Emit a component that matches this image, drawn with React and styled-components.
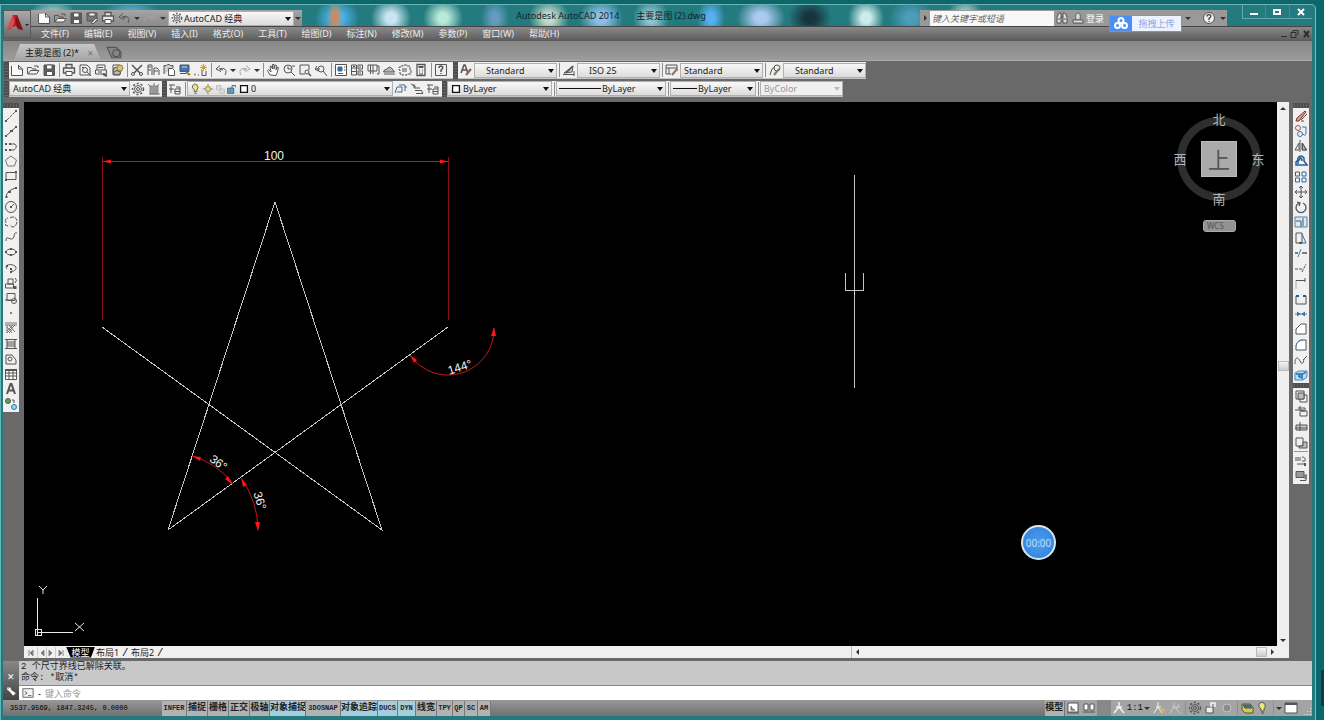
import styled, { createGlobalStyle, css } from 'styled-components'

const GlobalStyle = createGlobalStyle`
  *, *::before, *::after { box-sizing: border-box; }
  body {
    margin: 0;
    background: #0b6769;
    font-family: 'Noto Sans', 'Noto Sans CJK SC', sans-serif;
    font-size: 9px;
  }
  button, select, input {
    font-family: inherit;
    font-size: inherit;
    color: inherit;
    margin: 0;
    padding: 0;
    border: 0;
    border-radius: 0;
    background: none;
  }
`

/* every icon is drawn on a 14 x 14 grid */
const shapes = {
  new: <><path d="M1.500 3v9.500h11V6L8.500 2.500" fill="#fafafa" /><path d="M8.500 2v4h4" /></>,
  open: <><path d="M1.500 11V4.500h4l1 1.500h3.500v1.500" /><path d="M2 11l2.500-3.500H13L10.500 11z" fill="#f4f4f4" /><path d="M8 3h4v2" /></>,
  save: <><path d="M2 2h10.500v10.500H2z" fill="#5d5d5d" /><path d="M4.500 2h5.500v4H4.500zM4.500 8.500h6v4h-6z" fill="#fff" /></>,
  saveas: <><path d="M2 2h10v8H2z" fill="#777" /><path d="M4 2h6v3H4z" fill="#fff" /><path d="M6 12l5-5 1.500 1.500L8 13z" fill="#ddd" /></>,
  print: <><path d="M4 5V1.500h6V5M1.500 5h11v5h-11z" fill="#e8e8e8" strokeWidth="1.300" /><path d="M4 8.500h6v4H4z" fill="#fff" /></>,
  preview: <><path d="M2 12V2h7l3 3v7H2" /><circle cx="7" cy="7" r="2.500" /><path d="M9 9l4 4M4 4.500h2" /></>,
  publish: <><path d="M3 7V2h8v5M1.500 7h11v4h-11z" /><path d="M4 4.500h5M4 9h4" /><path d="M9 11l4 2" strokeWidth="2" /></>,
  globe: <><path d="M3 2h7v10H3z" /><circle cx="7" cy="8" r="4" fill="#b9c3a0" /><circle cx="10" cy="5" r="3" fill="#dfc067" stroke="#9a844d" /><path d="M4 9q3-3 6 0" /></>,
  cut: <><path d="M2 2l8 8M12 2L4 10" strokeWidth="1.500" /><circle cx="3" cy="11" r="1.500" /><circle cx="11" cy="11" r="1.500" /></>,
  copyclip: <><path d="M2 12V2h4v10M2 4h3M2 7h3M8 12V5h3l2 2v5M8 8h4" /></>,
  paste: <><path d="M2 11V2.500h2.500l1-1h2l1 1H11V5" fill="#ccc" /><path d="M6.500 5.500h4l2 2v5h-6z" fill="#fff" /></>,
  match: <><path d="M2 2h9v6.500H2z" fill="#3974bd" /><path d="M4 4h5" stroke="#cfe3f7" /><path d="M2 10.500h6" /><path d="M8 9l4 3" stroke="#a66b28" strokeWidth="2" /></>,
  blockedit: <><path d="M1 10.500v2M4 12h1M8 7v5.500h4V8" /><path d="M9.500 1v7M6 4.500h7M7 2l5 5M12 2L7 7" stroke="#d99b21" /></>,
  undo: <path d="M11 12c3-5-1-8-6-6M6 2.500L2 6l5 2.500M6 6.500l3 .5" fill="none" />,
  redo: <path d="M3 12C0 7 4 4 9 6M8 2.500L12 6 7 8.500M8 6.500L5 7" fill="none" stroke="#a4a4a4" />,
  pan: <path d="M4 12L1.500 7.500l1-1L5 9 4 3.500l1.200-.5L6.500 6V1.500h1.500V6l1-4 1.500.5L10 7l1.500-3 1 .5L11 10l-1 2.500z" fill="#fff" />,
  zoom: <><circle cx="6" cy="6" r="4" /><path d="M9 9l4 4M6 3.500V6h3M10 3h3" /></>,
  zoomwin: <><path d="M11 7V2H2v9h5" /><circle cx="9" cy="9" r="2" /><path d="M10.500 10.500L13 13" strokeWidth="1.500" /></>,
  zoomprev: <><circle cx="7" cy="6" r="3" /><path d="M9 8l4 5M1 6h5M3 3L1 6l3 2" /></>,
  props: <><path d="M1.500 1.500h11v11h-11z" fill="#fff" /><path d="M4 4h4v4H4z" fill="#3769a8" stroke="#3769a8" /><path d="M10 4h1.500M10 7h1.500M4 10.500h5" /></>,
  center: <><path d="M1.500 2h5v10h-5zM8 2h4.500v4H8zM8 8h4.500v4H8zM1.500 5h5M1.500 8.500h5" /><path d="M3 3.500h2M9 4h2M9 10h2" /></>,
  palette: <><path d="M2 2h9v6H2zM4.500 2v9M7 2v9M11 3h2v8h-2" /></>,
  sheet: <><path d="M1.500 9h11l-3-4-2-1-3 2-2 1zM2 11h11" fill="#b9b9b9" /></>,
  markup: <><path d="M3 3h2V2h4v1h3v4h1v4H9v1H4v-1H2V7H1V4h2z" fill="none" strokeDasharray="3 1" /><path d="M4 6h5M4 8h5" /></>,
  calc: <><path d="M3 1.500h8v11H3z" strokeWidth="1.300" /><path d="M4.500 4h5" strokeWidth="2" /><path d="M5 7h1M8 7h1M5 9h1M8 9h1M5 11h4" /></>,
  help: <><path d="M1.500 1.500h11v11h-11z" /><path d="M5 5q0-2 2-2 2.500.5 1.500 2.500L7 7v2M7 10v1" strokeWidth="1.500" /></>,
  textstyle: <><path d="M2 10L5 2h1l3 8M3 7h5" fill="none" strokeWidth="1.500" /><path d="M7 12l5-6" stroke="#865" strokeWidth="2" /></>,
  dimstyle: <><path d="M1 11.500h11M12 8v5M2 10l8-1 1-6z" fill="#ccc" /><path d="M4 10l7-7" strokeWidth="1.500" /></>,
  tablestyle: <><path d="M1 2h11v3H1zM1 5v6h5M4 5v6M12 5v3" /><path d="M7 12l5-6" stroke="#8a7a62" strokeWidth="2" /></>,
  leaderstyle: <><path d="M2 12l2-6 3-2" fill="none" /><circle cx="9" cy="5" r="3" /><path d="M6 12l5-6" stroke="#8a7a62" strokeWidth="2" /></>,
  gear: <><circle cx="7" cy="7" r="3.500" /><circle cx="7" cy="7" r="1.500" /><circle cx="7" cy="7" r="5.500" fill="none" strokeWidth="1.500" strokeDasharray="2 2" /></>,
  workspace: <><path d="M3 4h8v8H3z" fill="#999" stroke="#888" /><path d="M1 2l3 3M12 2l-2 3M2 12h11M7 1v3" stroke="#777" /></>,
  layers: <><path d="M1 3h6M3 3v8M1 7h5M8 5h4v7H7V7h5M7 9.500h5" /></>,
  layerprev: <><path d="M1 11l2-6h5v5H3M5 3h6v6M11 5h2" fill="none" stroke="#46698b" /></>,
  layerstate: <><path d="M1 2l5 3M4 2v4M4 6h6M5 8.500h6M6 11.500h7M11 8l2 3" /></>,
  bulb: <><path d="M5 10V8q-3-2-2-5 2-3 5-1 3 3 0 6v2z" fill="#eee67e" /><path d="M5 12h3" /></>,
  sun: <><path d="M7 3l4 4-4 4-4-4z" fill="#eddc68" /><path d="M7 1v1M7 12v1M1 7h1M12 7h1" /></>,
  freeze: <><path d="M3 3h5v5H3zM7 7h5v5H7z" fill="#ddd" stroke="#bbb" /></>,
  lock: <><path d="M2 6h7v6H2z" fill="#6fa5c1" stroke="#235a78" /><path d="M7 6V3h4v2M5 8v2" fill="none" stroke="#235a78" /></>,
  swatch: <path d="M3 3h8v8H3z" fill="#fff" stroke="#111" strokeWidth="1.500" />,
  find: <><path d="M2 12V6l2-4h2v10zM8 12V2h2l2 4v6z" fill="#ddd" /><path d="M6 6h2M3 8h2M9 8h2" /></>,
  user: <><path d="M5 8C3 0 11 0 9 8M2 12V9h10v3z" fill="#ddd" /></>,
  query: <><circle cx="7" cy="7" r="5.500" fill="#eee" /><path d="M5 5.500Q5 3.500 7 3.500q2.500.5 1.500 2.500L7 7.500V9M7 10v1" strokeWidth="1.500" /></>,
  line: <><path d="M3 11L11 3" strokeDasharray="3 1" /><path d="M1 12h2M11 2h2" strokeWidth="2" /></>,
  xline: <><path d="M2 12L13 2" /><path d="M1 12h2M6 7h3M11 3h2" strokeWidth="2" /></>,
  pline: <><path d="M6 11h4q4-3 1-6H7" fill="none" /><path d="M1 5h2M1 11h2M6 4v2M5 11h2" strokeWidth="2" /></>,
  polygon: <path d="M7 2l5.500 4-2 6h-7l-2-6z" stroke="#777" />,
  rect: <><path d="M2 3.500h10v7H2z" /><path d="M1 11h2M11 3h2" strokeWidth="2" /></>,
  arc: <><path d="M2 12q1-7 10-9" fill="none" /><path d="M1.500 12h2M4 7h3M11 3h2" strokeWidth="2" /></>,
  circle: <><circle cx="7" cy="7" r="5.500" /><path d="M8 6l2-2" /><path d="M6 7h2" strokeWidth="2" /></>,
  cloud: <path d="M6 3q4-3 7 2 0 6-4 7-2 0-3-2M4 11Q0 11 2 7 0 4 4 3" fill="none" strokeDasharray="4 1" />,
  spline: <path d="M2 11c0-8 5 2 8-4 0-3 1-5 3-4" fill="none" />,
  ellipse: <><ellipse cx="7" cy="7" rx="5" ry="3" /><path d="M1 7h2M11 7h2M6 4h2M6 10h2" strokeWidth="2" /></>,
  ellipsearc: <><path d="M3 8c-3-4 3-6 8-3 3 3-1 6-4 5" fill="none" /><path d="M2 5h2M6 8h2M6 11h2" strokeWidth="2" /></>,
  insert: <><path d="M1.500 8h8v4h-8zM4 3h5v5H4zM11 2q3 2 0 5" /><path d="M11 10v3" strokeWidth="3" /></>,
  block: <><path d="M3 2.500h8v7H3zM1 9h7" /><circle cx="10" cy="10" r="2.500" /></>,
  point: <path d="M6.500 6.500h1v1h-1z" />,
  hatch: <path d="M1 2h12M1 4h12M3 4v8M3 10l6-6M3 12l8-8M5 12l4-4M5 4l6 7M3 6l5 6" stroke="#777" />,
  gradient: <path d="M1 2.500h12M3 2v10M11 2v10M1 11.500h12M3 5h8M3 7h8M3 9h8" />,
  region: <><path d="M2 3v9h10V8L8 3z" /><circle cx="6" cy="7" r="2" /></>,
  table: <><path d="M1.500 2.500h11v10h-11z" fill="#fff" /><path d="M1 3h12" strokeWidth="2" /><path d="M2 6h10M2 9h10M5 3v9M9 3v9" /></>,
  text: <path d="M3 12L6.500 2h1L11 12M4 8.500h6" fill="none" strokeWidth="2" />,
  addsel: <><circle cx="4" cy="4" r="2.500" fill="#58a245" /><circle cx="10" cy="10" r="2.500" fill="#9fd2ef" stroke="#287cae" /><path d="M8 3h2v3" /></>,
  erase: <><path d="M2 12h3l7-9-1-1-8 7z" fill="#d49b8c" stroke="#8b332a" /><path d="M7 11l6-6M7 12h3" /></>,
  copy: <><circle cx="4" cy="4" r="2.500" stroke="#a35555" /><circle cx="6" cy="10" r="2.500" stroke="#2c78b5" /><path d="M8 3h4v7q-2 3-3 0" stroke="#2c78b5" fill="none" /></>,
  mirror: <><path d="M6 1v12M5 4v7H1zM8 4v7h5z" /><path d="M8.500 4v7H12z" fill="#8dbddf" /></>,
  offset: <><path d="M2 11V8q2-1 2-4 3-4 6 0v3l3 4zM4 10V7q2-1 2-3 2 0 2 3" fill="none" stroke="#245f9c" strokeWidth="1.500" /></>,
  array: <><path d="M1.500 2h4v4h-4z" /><path d="M8 2h4v4H8zM1.500 8h4v4h-4zM8 8h4v4H8z" stroke="#286ca8" /></>,
  move: <path d="M7 1v12M1 7h12M5 3l2-2 2 2M5 11l2 2 2-2M3 5L1 7l2 2M11 5l2 2-2 2" fill="none" />,
  rotate: <><path d="M9 3a5 5 0 1 1-4 0M3 2l3 1-1 3" fill="none" strokeWidth="1.300" /></>,
  scale: <><path d="M1 2h12v10H1z" fill="#d8eaf7" stroke="#4a83ad" /><path d="M2 6h5v6M9 3v8" /></>,
  stretch: <><path d="M2 2h6v10H2z" /><path d="M8 3l4 9H7" stroke="#356e9c" /><path d="M5 12h3" strokeWidth="2" /></>,
  trim: <><path d="M1 7h3M8 7h5" strokeWidth="1.500" /><path d="M4 11L7 3" stroke="#2c86a9" /></>,
  extend: <path d="M1 8h7M8 11l4-8" strokeDasharray="3 1" />,
  breakpt: <><path d="M2 12V3" stroke="#aaa" /><path d="M2 3.500h9M11 1v4" /></>,
  break: <><path d="M2 4v8h10V4" fill="none" /><path d="M2 4h3M9 4h3" stroke="#235ca6" strokeWidth="2" /></>,
  join: <path d="M1 7h12M3 5l3 2-3 2M11 5L8 7l3 2" fill="#3778a3" stroke="#3778a3" />,
  chamfer: <path d="M2 12V7l5-5h5v10z" fill="#fff" />,
  fillet: <><path d="M2 12V8q1-6 7-6h3v10z" fill="#fff" /><path d="M2 8q1-6 7-6" stroke="#4382b5" fill="none" /></>,
  blend: <path d="M1 11c0-8 3-7 5-3s3 3 4-2M9 7l4-4" fill="none" />,
  explode: <><path d="M1 5l4-2h8v6l-4 3H1z" stroke="#3b8bc1" fill="#b9dcf2" /><path d="M2 6h6v5M9 6l3-2M4 8h2v2" stroke="#1f67a5" strokeWidth="1.500" /></>,
  front: <><path d="M2 2h8v8H2z" /><path d="M4 4h6v6H4z" fill="#bbb" /><path d="M10 6h3v7H6v-3" fill="none" /></>,
  back: <><path d="M1 6h9M6 2v5h5V4H4M6 8v4h7V7H6" /></>,
  above: <><path d="M2 5h11v5H2z" fill="#ccc" /><path d="M6 2v9M1 8h12" /></>,
  under: <><path d="M2 2h7v8H2z" /><path d="M9 6h4v6H5v-2h4z" fill="#bbb" /></>,
  annot: <><path d="M2 3v4M4 3v4M6 3v4M8 3q4 0 3 4H8M3 10h8" /><path d="M11 9v3" strokeWidth="2" /></>,
  hatchback: <><path d="M2 2.500h8v6H2z" fill="#999" /><path d="M6 11.500h6V5M10 7h3M10 9h3" fill="none" /></>,
  layout: <path d="M2 2h10v9H2zM5 5v4h4M1 12h12" fill="#fff" />,
  views: <path d="M2 3h4v6H2zM8 3h4v6H8zM1 11h12" fill="#fff" />,
  scaleman: <path d="M7 1v5L2 12M7 6l5 6M4 6h6" fill="none" stroke="#f4f4f4" strokeWidth="1.500" />,
  scaleauto: <><path d="M6 1v5L2 12M6 6l4 6M4 6h5" fill="none" stroke="#f4f4f4" /><path d="M10 7v4M8 9h5" stroke="#e8b44c" strokeWidth="1.500" /></>,
  scaledim: <path d="M6 2v4L2 12M6 6l6 6M4 6h8M11 3L8 8" fill="none" stroke="#c9c9c9" />,
  unlock: <><path d="M2 6h7v6H2z" fill="#eee" /><path d="M7 6V2h4v4" fill="none" stroke="#f4f4f4" strokeWidth="1.500" /></>,
  ball: <circle cx="7" cy="7" r="4" fill="#8b8b8b" stroke="#c4c4c4" />,
  hardware: <><path d="M2 3h8l3 3v6H5L2 9z" fill="#d3ce41" /><path d="M3 4h7l2 3H5z" fill="#3a6eaf" /></>,
  screen: <><path d="M1 2h12v10H1z" fill="#fff" /><path d="M1 3h12" strokeWidth="2" /></>,
  prompt: <><path d="M1 2h12v10H1z" fill="#f4f4f4" /><path d="M3 5l3 2-3 2M7 10h4" fill="none" /></>,
  wrench: <path d="M2 2v3l3 2 5 6 3-3-6-4-1-3-2-1v3H2M10 10l2 1" fill="#fff" stroke="#fff" />,
  tabadd: <><path d="M1 3h8l4 4v5H5z" fill="#858585" /><circle cx="9" cy="8" r="3" /></>,
}

function Icon({ name, size = 14 }) {
  return (
    <svg width={size} height={size} viewBox="0 0 14 14" fill="none" stroke="#555" aria-hidden="true">
      {shapes[name]}
    </svg>
  )
}

function Tools({ items }) {
  return items.map((item, i) => {
    if (item === '|') return <Separator key={i} />
    if (item === 'v') return <Drop key={i} aria-label="more" />
    return <ToolButton key={i} aria-label={item}><Icon name={item} /></ToolButton>
  })
}

function Combo({ label, value, width, pad, icons = [], line, ...rest }) {
  return (
    <ComboBox $width={width} {...rest}>
      {icons.map((n) => <Icon key={n} name={n} size={12} />)}
      {line && <LineSample $width={line} />}
      <ComboSelect aria-label={label} $pad={pad} disabled={rest.$disabled}>
        <option>{value}</option>
      </ComboSelect>
    </ComboBox>
  )
}

const menus = ['文件(F)', '编辑(E)', '视图(V)', '插入(I)', '格式(O)', '工具(T)', '绘图(D)', '标注(N)', '修改(M)', '参数(P)', '窗口(W)', '帮助(H)']

const standardTools = ['new', 'open', 'save', '|', 'print', 'preview', 'publish', 'globe', '|', 'cut', 'copyclip', 'paste', 'match', 'blockedit', '|', 'undo', 'v', 'redo', 'v', '|', 'pan', 'zoom', 'zoomwin', 'zoomprev', '|', 'props', 'center', 'palette', 'sheet', 'markup', 'calc', '|', 'help']

const drawTools = ['line', 'xline', 'pline', 'polygon', 'rect', 'arc', 'circle', 'cloud', 'spline', 'ellipse', 'ellipsearc', 'insert', 'block', 'point', 'hatch', 'gradient', 'region', 'table', 'text', 'addsel']

const modifyTools = ['erase', 'copy', 'mirror', 'offset', 'array', 'move', 'rotate', 'scale', 'stretch', 'trim', 'extend', 'breakpt', 'break', 'join', 'chamfer', 'fillet', 'blend', 'explode']

const toggles = [
  ['INFER', 25], ['捕捉', 21], ['栅格', 21], ['正交', 21], ['极轴', 20], ['对象捕捉', 36, true],
  ['3DOSNAP', 35], ['对象追踪', 37, true], ['DUCS', 20, true], ['DYN', 18, true], ['线宽', 21],
  ['TPY', 16], ['QP', 12], ['SC', 13], ['AM', 13],
]

function Drawing() {
  return (
    <DrawingSvg aria-label="五角星">
      <g transform="translate(-24 -102)">
        <g stroke="#c6c6c6" fill="none" shapeRendering="crispEdges">
          <path d="M168 530L275 202L382 530L102 327M448 327L168 530" />
          <path d="M854.500 175V388M845.500 273V290.500H863.500V273" />
        </g>
        <g stroke="#c4161c" fill="none">
          <path d="M102.500 157V320M448.500 157V320" stroke="#8d1016" />
          <path d="M102 161.500H448" />
          <path d="M494 328A46 46 0 0 1 410 355" />
          <path d="M192 456A79 79 0 0 1 233 484" />
          <path d="M241 478A90 90 0 0 1 258 530" />
        </g>
        <g fill="#ff1418">
          <path d="M103 161.500l8-2v4zM448 161.500l-8-2v4z" />
          <path d="M494 327l-3 9h5zM410 355l4 8 3-3z" />
          <path d="M192 456l8 5 1-4zM233 485l-8-6 3-3z" />
          <path d="M241 478l2 9 4-2zM258 531l-3-9h5z" />
        </g>
        <g fill="#f2f2f2" fontSize="12" fontFamily="Liberation Sans, sans-serif" textAnchor="middle">
          <text x="274" y="160">100</text>
          <text transform="translate(461 371) rotate(-17)">144°</text>
          <text transform="translate(216 466) rotate(36)">36°</text>
          <text transform="translate(256 502) rotate(72)">36°</text>
        </g>
      </g>
    </DrawingSvg>
  )
}

function App() {
  return (
    <Desktop>
      <GlobalStyle />
      <Window>
        <Header>
          <LogoButton aria-label="AutoCAD">
            <svg width="27" height="28" viewBox="0 0 27 28">
              <path d="M3 19L9 4h4l6 15-5-1-2-3-4 1-2 2z" fill="#b3202a" />
              <path d="M9 4l2 7-3 5-5 3z" fill="#e14a49" />
              <path d="M13 4l6 15-5-1-3-7z" fill="#861119" />
              <path d="M21 13h4l-2 2z" fill="#222" />
            </svg>
          </LogoButton>
          <TitleBar>
            <QuickAccess>
              <Tools items={['new', 'open', 'save', 'saveas', 'print', 'undo', 'v', 'redo', 'v']} />
              <Combo label="工作空间" value="AutoCAD 经典" width={126} icons={['gear']} pad={1} />
              <Drop aria-label="自定义快速访问工具栏" />
            </QuickAccess>
            <Title><span>Autodesk AutoCAD 2014</span><span>主要是图 (2).dwg</span></Title>
            <InfoCenter>
              <Arrow $dir="right" aria-label="展开" />
              <SearchInput aria-label="搜索" placeholder="键入关键字或短语" />
              <Tools items={['find', 'user']} />
              <LoginButton>登录</LoginButton>
              <Drop aria-label="登录选项" />
              <HelpGroup><Tools items={['query', 'v']} /></HelpGroup>
              <UploadBadge>
                <svg width="22" height="17" viewBox="0 0 22 17" fill="none" stroke="#fff" strokeWidth="2">
                  <circle cx="11" cy="5.500" r="2.500" /><circle cx="7.500" cy="10.500" r="2.500" /><circle cx="14.500" cy="10.500" r="2.500" />
                </svg>
                <span>拖拽上传</span>
              </UploadBadge>
            </InfoCenter>
            <WindowButtons>
              <button aria-label="最小化"><svg width="10" height="10" stroke="#fff" strokeWidth="2"><path d="M1 7h8" /></svg></button>
              <button aria-label="最大化"><svg width="10" height="10" stroke="#fff" strokeWidth="2" fill="none"><path d="M2 3h6v4H2z" /></svg></button>
              <button aria-label="关闭"><svg width="10" height="10" stroke="#fff" strokeWidth="2"><path d="M2 2l6 6M8 2L2 8" /></svg></button>
            </WindowButtons>
          </TitleBar>
          <MenuBar>
            {menus.map((m) => <button key={m}>{m}</button>)}
            <DocButtons aria-hidden="true" width="32" height="10" fill="none" stroke="#2d2d2d">
              <path d="M1 7.500h6M11 3.500h5v5h-5zM13 3V1.500h5V6" /><path d="M24 2l5 6M29 2l-5 6" strokeWidth="2" />
            </DocButtons>
          </MenuBar>
        </Header>

        <FileTabs>
          <FileTab>主要是图 (2)*<span>✕</span></FileTab>
          <Icon name="tabadd" size={16} />
        </FileTabs>

        <ToolRows>
          <ToolRow>
            <Grip />
            <Bar $width={444}><Tools items={standardTools} /></Bar>
            <Grip />
            <Bar>
              <Tools items={['textstyle']} />
              <Combo label="文字样式" value="Standard" width={83} pad={9} />
              <Tools items={['|', 'dimstyle']} />
              <Combo label="标注样式" value="ISO 25" width={83} pad={9} />
              <Tools items={['|', 'tablestyle']} />
              <Combo label="表格样式" value="Standard" width={83} pad={1} />
              <Tools items={['|', 'leaderstyle']} />
              <Combo label="多重引线样式" value="Standard" width={83} pad={9} />
            </Bar>
          </ToolRow>
          <ToolRow $small>
            <Grip />
            <Bar $width={153}>
              <Combo label="工作空间" value="AutoCAD 经典" width={121} pad={1} />
              <Tools items={['gear', 'workspace']} />
            </Bar>
            <Grip />
            <Bar $width={275}>
              <Tools items={['layers', '|']} />
              <Combo label="图层" value="0" width={206} icons={['bulb', 'sun', 'freeze', 'lock', 'swatch']} pad={1} />
              <Tools items={['layerprev', 'layerstate', 'layers']} />
            </Bar>
            <Grip />
            <Bar>
              <Combo label="颜色" value="ByLayer" width={105} icons={['swatch']} pad={1} />
              <Tools items={['|']} />
              <Combo label="线型" value="ByLayer" width={110} line={42} pad={1} />
              <Tools items={['|']} />
              <Combo label="线宽" value="ByLayer" width={86} line={24} pad={1} />
              <Tools items={['|']} />
              <Combo label="打印样式" value="ByColor" width={83} pad={1} $disabled />
            </Bar>
          </ToolRow>
        </ToolRows>

        <Workspace>
          <SidePalette>
            <Grip $flat />
            <ToolColumn $height={304}><Tools items={drawTools} /></ToolColumn>
          </SidePalette>
          <Viewport>
            <Canvas>
              <Drawing />
              <UcsIcon width="60" height="56" fill="none" stroke="#e8e8e8">
                <path d="M4.500 50V13M4 47.500h36M2.500 44.500h6v6h-6z" shapeRendering="crispEdges" />
                <path d="M6 1l4 4 4-4M10 5v4M42 38l9 8M51 38l-9 8" />
              </UcsIcon>
              <ViewCube>
                <span>北</span>
                <span>西</span>
                <CubeFace>上</CubeFace>
                <span>东</span>
                <span>南</span>
              </ViewCube>
              <WcsButton>WCS</WcsButton>
              <TimeBadge>00:00</TimeBadge>
            </Canvas>
            <ScrollColumn>
              <Arrow $dir="up" aria-label="向上" />
              <Track $grow={246} />
              <Thumb />
              <Track $grow={262} />
              <Arrow $dir="down" aria-label="向下" />
            </ScrollColumn>
            <LayoutBar>
              <LayoutNav width="42" height="11" fill="#777" stroke="#888">
                <path d="M5 3v6M9 3L6 6l3 3zM20 3l-3 3 3 3zM25 3l3 3-3 3zM35 3l3 3-3 3zM39 3v6" />
                <path d="M13.500 0v11M22.500 0v11M31.500 0v11" stroke="#ccc" />
              </LayoutNav>
              <LayoutTab $active>模型</LayoutTab>
              <LayoutTab>布局1</LayoutTab><i>/</i>
              <LayoutTab>布局2</LayoutTab><i>/</i>
              <ScrollRow>
                <Arrow $dir="left" aria-label="向左" />
                <Track $grow={1} />
                <Thumb />
                <Arrow $dir="right" aria-label="向右" />
              </ScrollRow>
            </LayoutBar>
          </Viewport>
          <SidePalette>
            <Grip $flat />
            <ToolColumn $height={275}><Tools items={modifyTools} /></ToolColumn>
            <Grip $flat />
            <ToolColumn $height={96}>
              <Tools items={['front', 'back', 'above', 'under']} />
              <Separator $flat />
              <Tools items={['annot', 'hatchback']} />
            </ToolColumn>
          </SidePalette>
        </Workspace>

        <Command>
          <CommandHandle>
            <button aria-label="关闭">✕</button>
            <button aria-label="自定义"><Icon name="wrench" size={10} /></button>
          </CommandHandle>
          <CommandText>
            <History>
              <div>2 个尺寸界线已解除关联。</div>
              <div>命令: *取消*</div>
            </History>
            <CommandLine>
              <Icon name="prompt" size={12} />
              <span>-</span>
              <input aria-label="命令" placeholder="键入命令" />
            </CommandLine>
          </CommandText>
        </Command>

        <StatusBar>
          <Coords>3537.9569, 1847.3245, 0.0000</Coords>
          {toggles.map(([name, width, on]) => (
            <Toggle key={name} $width={width} $on={on} aria-pressed={!!on}>{name}</Toggle>
          ))}
          <StatusTray>
            <Toggle $width={20}>模型</Toggle>
            <Tools items={['layout', 'views']} />
            <TraySpace />
            <Tools items={['scaleman']} />
            <Scale>1:1</Scale>
            <Tools items={['v', 'scaleauto', 'scaledim', '|', 'gear', 'unlock', 'ball', '|', 'hardware', 'bulb', '|', 'v', 'screen']} />
            <Resize width="10" height="10" fill="#ddd"><path d="M8 2h1v1H8zM5 5h1v1H5zM8 5h1v1H8zM2 8h1v1H2zM5 8h1v1H5zM8 8h1v1H8z" /></Resize>
          </StatusTray>
        </StatusBar>
      </Window>
    </Desktop>
  )
}

const Desktop = styled.div`
  height: 100vh;
  min-height: 600px;
  padding: 4px 8px 0 0;
  background: linear-gradient(#17354c, #17354c) right calc(100% - 14px) / 3px 36px no-repeat, #0b6769;
  background-position: right bottom 14px;
`

const Window = styled.div`
  height: 100%;
  display: flex;
  flex-direction: column;
  border-top: 1px solid #6fb3b4;
  border-right: 1px solid #72c0bf;
  border-radius: 0 5px 0 0;
  padding: 0 3px 4px 3px;
  background: #22797f;
  box-shadow: inset 1px 0 #67b6b7;
`

const Header = styled.header`
  display: grid;
  grid-template-columns: 28px 1fr;
  grid-template-rows: 21px 15px;
`

const LogoButton = styled.button`
  grid-area: 1 / 1 / 3 / 2;
  position: relative;
  z-index: 1;
  width: 28px;
  height: 28px;
  margin-top: 5px;
  background: linear-gradient(#aaa, #6b6b6b);
  border: 1px solid #5a5a5a;
  & svg {
    display: block;
  }
`

const blob = (color, x, w) => `radial-gradient(ellipse ${w}px 20px at ${x}px 13px, ${color} 25%, transparent)`

const TitleBar = styled.div`
  grid-area: 1 / 1 / 2 / 3;
  display: flex;
  align-items: flex-end;
  padding-left: 28px;
  min-width: 0;
  background:
    ${blob('#c98b62', 332, 8)},
    ${blob('#4cb4ef', 334, 22)},
    ${blob('#c9e5f2', 388, 20)},
    ${blob('#b7ead9', 440, 20)},
    ${blob('#659bc0', 492, 14)},
    ${blob('#c3d9c9', 546, 20)},
    ${blob('#8fbfe8', 598, 22)},
    ${blob('#8fc4d0', 648, 18)},
    ${blob('#58aff0', 708, 14)},
    ${blob('#acc9ef', 758, 24)},
    ${blob('#18343e', 807, 22)},
    ${blob('#cdecee', 863, 18)},
    ${blob('#4b9db9', 908, 22)},
    ${blob('#b5d5c9', 962, 18)},
    ${blob('#6cabd8', 128, 30)},
    ${blob('#a4cfc9', 50, 24)},
    #237b7f;
`

const QuickAccess = styled.div`
  height: 16px;
  display: flex;
  align-items: center;
  padding-left: 5px;
  background: linear-gradient(#a4a4a4, #8b8b8b);
  & > button:nth-of-type(7), & > button:nth-of-type(9) {
    width: 10px;
  }
`

const Title = styled.div`
  flex: 1;
  display: flex;
  justify-content: center;
  align-self: center;
  gap: 17px;
  color: #10242a;
  white-space: nowrap;
`

const InfoCenter = styled.div`
  position: relative;
  height: 16px;
  width: 307px;
  display: flex;
  align-items: center;
  background: #999;
`

const SearchInput = styled.input`
  width: 124px;
  height: 15px;
  padding: 0 2px;
  background: #f8f8f8;
  font-style: italic;
  &::placeholder {
    color: #666;
  }
`

const LoginButton = styled.button`
  flex: 1;
  color: #fff;
  text-align: left;
`

const HelpGroup = styled.div`
  display: flex;
  align-items: center;
  gap: 2px;
  margin-left: 9px;
`

const UploadBadge = styled.button`
  position: absolute;
  top: 5px;
  left: 189px;
  width: 73px;
  height: 17px;
  display: flex;
  background: #4c8ff2;
  border: 1px solid #5b98f2;
  & span {
    flex: 1;
    line-height: 15px;
    color: #8fa7e4;
    background: #edf2ff;
  }
  & svg {
    margin-top: -1px;
    flex: none;
  }
`

const WindowButtons = styled.div`
  display: flex;
  align-self: flex-start;
  width: 70px;
  height: 14px;
  margin-left: 15px;
  border: solid #5ea9ac;
  border-width: 0 0 1px 1px;
  & button {
    flex: 1;
    line-height: 0;
  }
  & button + button {
    border-left: 1px solid #3f9195;
  }
`

const MenuBar = styled.nav`
  grid-area: 2 / 1 / 3 / 3;
  display: flex;
  align-items: center;
  gap: 15px;
  padding-left: 38px;
  color: #ececec;
  background: linear-gradient(#898989, #5b5b5b);
  border-top: 1px solid #464646;
  & button {
    white-space: nowrap;
    line-height: 14px;
  }
`

const DocButtons = styled.svg`
  margin-left: auto;
`

const FileTabs = styled.div`
  height: 20px;
  display: flex;
  align-items: flex-end;
  padding-left: 11px;
  gap: 5px;
  background: linear-gradient(#868686, #9c9c9c);
  border-bottom: 1px solid #aaa;
`

const FileTab = styled.button`
  width: 87px;
  height: 16px;
  display: flex;
  align-items: center;
  justify-content: space-between;
  padding: 0 7px 0 11px;
  color: #151515;
  background: linear-gradient(#c8c8c8, #a5a5a5);
  clip-path: polygon(7% 0, 92% 0, 100% 100%, 0 100%);
  & span {
    color: #777;
    font-size: 8px;
  }
`

const ToolRows = styled.div`
  display: flex;
  flex-direction: column;
  gap: 2px;
  padding: 1px 0 5px 1px;
  background: #696969;
`

const ToolRow = styled.div`
  display: flex;
  height: ${(p) => (p.$small ? 16 : 17)}px;
`

const Grip = styled.div`
  flex: none;
  width: ${(p) => (p.$flat ? 16 : 5)}px;
  height: ${(p) => (p.$flat ? '5px' : 'auto')};
  background: repeating-linear-gradient(${(p) => (p.$flat ? '90deg' : '0deg')}, #666 0 1px, #4c4c4c 1px 3px);
  border: 1px solid #505050;
`

const Bar = styled.div`
  display: flex;
  flex: none;
  align-items: center;
  width: ${(p) => (p.$width ? p.$width + 'px' : 'auto')};
  color: #222;
  background: #f0f0f0;
  border-bottom: 1px solid #c4c4c4;
`

const ToolButton = styled.button`
  flex: none;
  width: 16px;
  height: 15px;
  display: grid;
  place-items: center;
`

const Separator = styled.span`
  flex: none;
  width: ${(p) => (p.$flat ? 14 : 4)}px;
  height: ${(p) => (p.$flat ? 1 : 14)}px;
  background: ${(p) => (p.$flat ? '#999' : 'linear-gradient(90deg, transparent 2px, #8d8d8d 2px 3px, transparent 3px)')};
`

const Drop = styled.button`
  flex: none;
  width: 8px;
  height: 14px;
  display: grid;
  place-items: center;
  &::after {
    content: '';
    border: solid transparent;
    border-width: 3px 3px 0;
    border-top-color: #333;
  }
`

const ComboBox = styled.div`
  position: relative;
  flex: none;
  width: ${(p) => p.$width}px;
  height: 15px;
  display: flex;
  align-items: center;
  padding-left: 2px;
  color: ${(p) => (p.$disabled ? '#999' : '#222')};
  background: ${(p) => (p.$disabled ? '#f0f0f0' : 'linear-gradient(#f8f8f8, #dcdcdc)')};
  border: 1px solid #b0b0b0;
  & svg {
    flex: none;
  }
  &::after {
    content: '';
    position: absolute;
    right: 2px;
    top: 5px;
    border: solid transparent;
    border-width: 4px 3px 0;
    border-top-color: ${(p) => (p.$disabled ? '#bbb' : '#111')};
    pointer-events: none;
  }
`

const ComboSelect = styled.select`
  appearance: none;
  flex: 1;
  min-width: 0;
  height: 13px;
  line-height: 13px;
  padding-left: ${(p) => p.$pad || 0}px;
  opacity: 1;
`

const LineSample = styled.span`
  width: ${(p) => p.$width}px;
  border-top: 1px solid #111;
`

const Workspace = styled.main`
  flex: 1;
  min-height: 0;
  display: flex;
  background: #696969;
`

const SidePalette = styled.aside`
  flex: none;
  padding: 1px 3px 0 0;
`

const ToolColumn = styled.div`
  width: 16px;
  height: ${(p) => p.$height}px;
  display: flex;
  flex-direction: column;
  justify-content: space-between;
  align-items: center;
  background: #f0f0f0;
`

const Viewport = styled.section`
  flex: 1;
  min-width: 0;
  display: grid;
  grid-template-columns: 1fr 12px;
  grid-template-rows: 1fr 12px;
  margin: 0 4px 3px 2px;
`

const Canvas = styled.div`
  position: relative;
  overflow: hidden;
  background: #000;
`

const DrawingSvg = styled.svg`
  display: block;
  width: 100%;
  height: 100%;
`

const UcsIcon = styled.svg`
  position: absolute;
  left: 9px;
  bottom: 5px;
`

const ViewCube = styled.div`
  position: absolute;
  right: 12px;
  top: 10px;
  width: 92px;
  height: 94px;
  display: grid;
  grid-template-columns: 14px 1fr 14px;
  grid-template-rows: 14px 1fr 14px;
  place-items: center;
  color: #b4b4b4;
  font-size: 13px;
  line-height: 14px;
  &::before {
    content: '';
    position: absolute;
    inset: 5px 4px;
    border: 8px solid #2e2e2e;
    border-radius: 50%;
  }
  & span {
    position: relative;
  }
  & span:first-child, & span:last-child {
    grid-column: 1 / 4;
  }
`

const CubeFace = styled.button`
  position: relative;
  width: 36px;
  height: 36px;
  color: #555;
  font-size: 22px;
  line-height: 30px;
  background: #aaa;
  border: 1px solid #bbb;
`

const WcsButton = styled.button`
  position: absolute;
  right: 41px;
  top: 118px;
  width: 33px;
  height: 12px;
  padding-left: 3px;
  text-align: left;
  font-size: 8px;
  line-height: 10px;
  color: #555;
  background: #929292;
  border: 1px solid #aaa;
  border-radius: 3px;
`

const TimeBadge = styled.button`
  position: absolute;
  right: 221px;
  bottom: 86px;
  width: 35px;
  height: 35px;
  font-size: 10px;
  color: #b9dcfa;
  background: radial-gradient(#4f9df0, #2d7fd8);
  border: 2px solid #d5e6f5;
  border-radius: 50%;
`

const ScrollColumn = styled.div`
  display: flex;
  flex-direction: column;
  align-items: center;
  background: #efefef;
`

const Track = styled.div`
  flex: ${(p) => p.$grow} 1 0;
`

const Thumb = styled.div`
  flex: none;
  width: 11px;
  height: 10px;
  background: linear-gradient(#f4f4f4, #ccc);
  border: 1px solid #bbb;
`

const arrows = {
  up: css`border-width: 0 3px 3px; border-bottom-color: #333;`,
  down: css`border-width: 3px 3px 0; border-top-color: #333;`,
  left: css`border-width: 3px 3px 3px 0; border-right-color: #333;`,
  right: css`border-width: 3px 0 3px 3px; border-left-color: #333;`,
}

const Arrow = styled.button`
  flex: none;
  width: 10px;
  height: 12px;
  display: grid;
  place-items: center;
  &::after {
    content: '';
    border: solid transparent;
    ${(p) => arrows[p.$dir]}
  }
`

const LayoutBar = styled.div`
  grid-column: 1 / 3;
  display: flex;
  align-items: center;
  color: #222;
  background: #f0f0f0;
  line-height: 12px;
  & i {
    width: 10px;
    text-align: center;
    font-size: 11px;
  }
`

const LayoutNav = styled.svg`
  flex: none;
`

const LayoutTab = styled.button`
  height: 11px;
  line-height: 11px;
  width: ${(p) => (p.$active ? 29 : 25)}px;
  white-space: nowrap;
  ${(p) => p.$active && css`
    color: #fff;
    background: #000;
    clip-path: polygon(0 0, 100% 0, 86% 100%, 16% 100%);
  `}
`

const ScrollRow = styled.div`
  width: 438px;
  margin-left: auto;
  display: flex;
  align-items: center;
  padding-right: 12px;
  border-left: 1px solid #bbb;
`

const Command = styled.section`
  flex: none;
  display: flex;
  background: #c8c8c8;
`

const CommandHandle = styled.div`
  width: 16px;
  padding-top: 8px;
  display: flex;
  flex-direction: column;
  justify-content: space-around;
  align-items: center;
  color: #fff;
  background: linear-gradient(#888, #444);
`

const CommandText = styled.div`
  flex: 1;
`

const History = styled.div`
  height: 24px;
  padding: 1px 2px;
  font-family: 'Liberation Mono', 'Noto Sans CJK SC', monospace;
  line-height: 11px;
  color: #222;
`

const CommandLine = styled.label`
  height: 15px;
  display: flex;
  align-items: center;
  gap: 4px;
  padding-left: 3px;
  background: #fff;
  border-top: 1px solid #888;
  & input {
    flex: 1;
    outline: 0;
  }
  & input::placeholder {
    color: #999;
  }
`

const StatusBar = styled.footer`
  flex: none;
  height: 16px;
  display: flex;
  align-items: center;
  color: #222;
  background: linear-gradient(#989898, #707070);
  font-family: 'Liberation Mono', 'Noto Sans CJK SC', monospace;
`

const Coords = styled.output`
  width: 159px;
  padding-left: 7px;
  font-size: 7px;
  color: #000;
`

const Toggle = styled.button`
  flex: none;
  width: ${(p) => p.$width}px;
  height: 15px;
  overflow: hidden;
  white-space: nowrap;
  font-size: ${(p) => (/^[\x00-\x7f]+$/.test(p.children) ? 7 : 9)}px;
  font-weight: bold;
  line-height: 14px;
  background: ${(p) => (p.$on ? '#a6cddb' : '#b2b2b2')};
  border-right: 1px solid #777;
`

const StatusTray = styled.div`
  margin-left: auto;
  display: flex;
  align-items: center;
  background: #a4a4a4;
`

const TraySpace = styled.div`
  width: 14px;
  height: 16px;
  background: #888;
`

const Scale = styled.span`
  color: #111;
`

const Resize = styled.svg`
  align-self: flex-end;
  margin-left: 3px;
`

export default App
